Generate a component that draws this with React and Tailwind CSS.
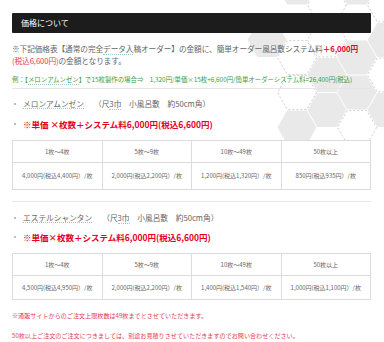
import React from 'react'

const R = 19.5
const hexPoints = (cx, cy) => {
  const pts = []
  for (let i = 0; i < 6; i++) {
    const a = (Math.PI / 3) * i
    pts.push(`${(cx + R * Math.cos(a)).toFixed(1)},${(cy + R * Math.sin(a)).toFixed(1)}`)
  }
  return pts.join(' ')
}

// flat-top honeycomb decoration in the top-right corner
const hexes = [
  { x: 297, y: -12.5, t: 'f' },
  { x: 327, y: 5, t: 'd' },
  { x: 357, y: -12.5, t: 'f' },
  { x: 387, y: 5, t: 'd' },
  { x: 267, y: 40, t: 'f' },
  { x: 297, y: 57.5, t: 'd' },
  { x: 327, y: 40, t: 'd' },
  { x: 357, y: 57.5, t: 'f' },
  { x: 387, y: 40, t: 'f' },
  { x: 327, y: 75, t: 'f' },
  { x: 297, y: 92.5, t: 'd' },
  { x: 357, y: 92.5, t: 'f' },
  { x: 387, y: 75, t: 'd' },
  { x: 327, y: 110, t: 'f' },
  { x: 297, y: 127.5, t: 'f' },
  { x: 357, y: 127.5, t: 'd' },
  { x: 387, y: 110, t: 'f' },
]

const HexBackground = () => (
  <svg className="absolute top-0 right-0" width="384" height="342" viewBox="0 0 384 342">
    {hexes.map((h, i) => (
      <polygon
        key={i}
        points={hexPoints(h.x, h.y)}
        fill={h.t === 'f' ? '#e9e9e9' : '#ffffff'}
        stroke={h.t === 'd' ? '#cfcfcf' : 'none'}
        strokeWidth="1"
        strokeDasharray={h.t === 'd' ? '2 2' : undefined}
      />
    ))}
  </svg>
)

const PriceTable = ({ prices, dataRow }) => (
  <table className="w-full border-collapse table-fixed text-[6px] text-[#666] bg-white">
    <tbody>
      <tr className="h-[22px]">
        {['1枚〜4枚', '5枚〜9枚', '10枚〜49枚', '50枚以上'].map((h) => (
          <td key={h} className="border border-[#dcdcdc] text-center p-0">{h}</td>
        ))}
      </tr>
      <tr className={dataRow}>
        {prices.map((p) => (
          <td key={p} className="border border-[#dcdcdc] text-center p-0 whitespace-nowrap">{p}</td>
        ))}
      </tr>
    </tbody>
  </table>
)

const Bullet = ({ children, className = '' }) => (
  <div className={`flex items-center h-[12px] leading-[12px] whitespace-nowrap ${className}`}>
    <span className="w-[2px] h-[2px] rounded-full bg-[#aaa] ml-[2px] mr-[7px]" />
    {children}
  </div>
)

export default function App() {
  return (
    <div className="relative w-[384px] h-[342px] bg-white overflow-hidden font-['Noto_Sans_CJK_JP','Noto_Sans',sans-serif]">
      <HexBackground />
      <div className="relative pl-3 pr-[13px] pt-[13px]">
        <div className="h-[19.5px] bg-[#1c1c1c] rounded-[1px] flex items-center pl-[9px] text-white text-[8px]">
          価格について
        </div>

        <p className="mt-[10.5px] text-[7.7px] leading-[12px] text-[#666] tracking-[-0.1px]">
          ※下記価格表【通常の完全<span className="border-b border-dotted border-[#9cc]">データ入</span>稿オーダー】の金額に、簡単オーダー風呂敷システム料　
          <b className="text-[#e60023]">＋6,000円</b>
          <br />
          <span className="text-[#e8384f]">(税込6,600円)</span>の金額となります。
        </p>

        <p className="mt-[8px] text-[6.4px] leading-[10px] text-[#3d9b3d] whitespace-nowrap">
          例：【<span className="border-b border-dotted border-[#9cc]">メロンアムンゼン</span>】で15枚製作の場合⇒　1,320円/単価×15枚+6,600円/簡単オーダーシステム料=26,400円(税込)
        </p>

        <div className="mt-[3px] h-px bg-[#e6e6e6]" />

        <Bullet className="mt-[9px] text-[7.7px] text-[#666]">
          <span className="border-b border-dotted border-[#9cc] leading-[9px]">メロンアムンゼン</span>
          <span className="ml-[10px]">（尺<span className="border-b border-dotted border-[#9cc]">3巾</span>　小風呂敷　約50cm角）</span>
        </Bullet>
        <Bullet className="mt-[7.5px] text-[8.5px] font-bold text-[#e60023]">
          ※単価 ×枚数＋システム料6,000円(税込6,600円)
        </Bullet>

        <div className="mt-[10px]">
          <PriceTable
            dataRow="h-[27px]"
            prices={['4,000円(税込4,400円）/枚', '2,000円(税込2,200円）/枚', '1,200円(税込1,320円）/枚', '850円(税込935円）/枚']}
          />
        </div>

        <div className="mt-[11.5px] h-px bg-[#e6e6e6]" />

        <Bullet className="mt-[9.5px] text-[7.7px] text-[#666]">
          <span className="border-b border-dotted border-[#9cc] leading-[9px]">エステルシャンタン</span>
          <span className="ml-[10px]">（尺<span className="border-b border-dotted border-[#9cc]">3巾</span>　小風呂敷　約50cm角）</span>
        </Bullet>
        <Bullet className="mt-[7px] text-[8.5px] font-bold text-[#e60023]">
          ※単価×枚数＋システム料6,000円(税込6,600円)
        </Bullet>

        <div className="mt-[10.5px]">
          <PriceTable
            dataRow="h-[24px]"
            prices={['4,500円(税込4,950円）/枚', '2,000円(税込2,200円）/枚', '1,400円(税込1,540円）/枚', '1,000円(税込1,100円）/枚']}
          />
        </div>

        <p className="mt-[11px] text-[6.1px] leading-[10px] text-[#e8384f] whitespace-nowrap">
          ※通販サイトからのご注文上限枚数は49枚までとさせていただきます。
        </p>
        <p className="mt-[10px] text-[6.1px] leading-[10px] text-[#e8384f] whitespace-nowrap">
          50枚以上ご注文のご注文につきましては、別途お見積りさせていただきますのでお問い合わせください。
        </p>
      </div>
    </div>
  )
}
